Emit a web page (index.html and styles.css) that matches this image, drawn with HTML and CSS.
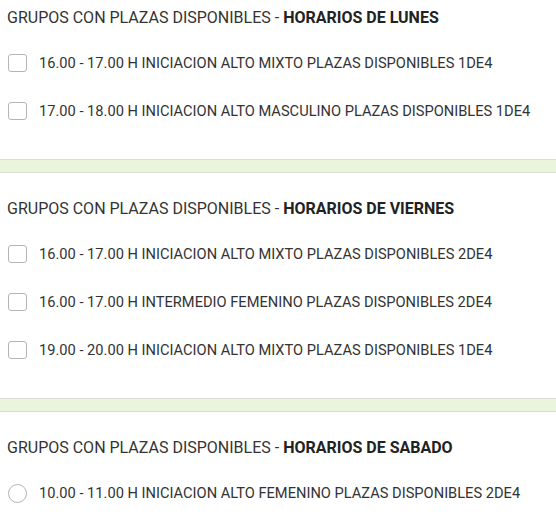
FILE: index.html
```html
<!DOCTYPE html>
<html lang="es">
<head>
    <meta charset="UTF-8">
    <meta name="viewport" content="width=device-width, initial-scale=1.0">
    <title>Grupos con plazas disponibles</title>
    <link rel="stylesheet" href="styles.css">
</head>
<body>
    <div class="section">
        <div class="section-title">GRUPOS CON PLAZAS DISPONIBLES - <b>HORARIOS DE LUNES</b></div>
        <label class="option"><span class="check"></span>16.00 - 17.00 H INICIACION ALTO MIXTO PLAZAS DISPONIBLES 1DE4</label>
        <label class="option"><span class="check"></span>17.00 - 18.00 H INICIACION ALTO MASCULINO PLAZAS DISPONIBLES 1DE4</label>
    </div>
    <div class="divider"></div>
    <div class="section">
        <div class="section-title">GRUPOS CON PLAZAS DISPONIBLES - <b>HORARIOS DE VIERNES</b></div>
        <label class="option"><span class="check"></span>16.00 - 17.00 H INICIACION ALTO MIXTO PLAZAS DISPONIBLES 2DE4</label>
        <label class="option"><span class="check"></span>16.00 - 17.00 H INTERMEDIO FEMENINO PLAZAS DISPONIBLES 2DE4</label>
        <label class="option"><span class="check"></span>19.00 - 20.00 H INICIACION ALTO MIXTO PLAZAS DISPONIBLES 1DE4</label>
    </div>
    <div class="divider"></div>
    <div class="section">
        <div class="section-title">GRUPOS CON PLAZAS DISPONIBLES - <b>HORARIOS DE SABADO</b></div>
        <label class="option"><span class="check radio"></span>10.00 - 11.00 H INICIACION ALTO FEMENINO PLAZAS DISPONIBLES 2DE4</label>
    </div>
</body>
</html>
```

FILE: styles.css
```css
* {
    box-sizing: border-box;
}
body {
    margin: 0;
    font-family: Roboto, "Liberation Sans", Arial, sans-serif;
    font-size: 15px;
    color: #333;
    background-color: #fff;
}
.section {
    padding: 26px 8px 24px 7px;
}
.section:first-child {
    padding-top: 8px;
}
.section-title {
    font-size: 16px;
    line-height: 20px;
    margin-bottom: 11px;
}
.section-title b {
    font-weight: bold;
    color: #222;
}
.option {
    display: flex;
    align-items: center;
    height: 48px;
    padding-left: 1px;
    font-size: 14.65px;
    cursor: pointer;
}
.check {
    width: 19px;
    height: 18px;
    margin-right: 12px;
    border: 1.5px solid #b5b5b5;
    border-radius: 3px;
    flex-shrink: 0;
}
.check.radio {
    height: 19px;
    border-radius: 50%;
}
.divider {
    height: 14px;
    background-color: #eaf5dc;
    border-top: 1px solid #d9dcd6;
    border-bottom: 1px solid #d9dcd6;
}
```
